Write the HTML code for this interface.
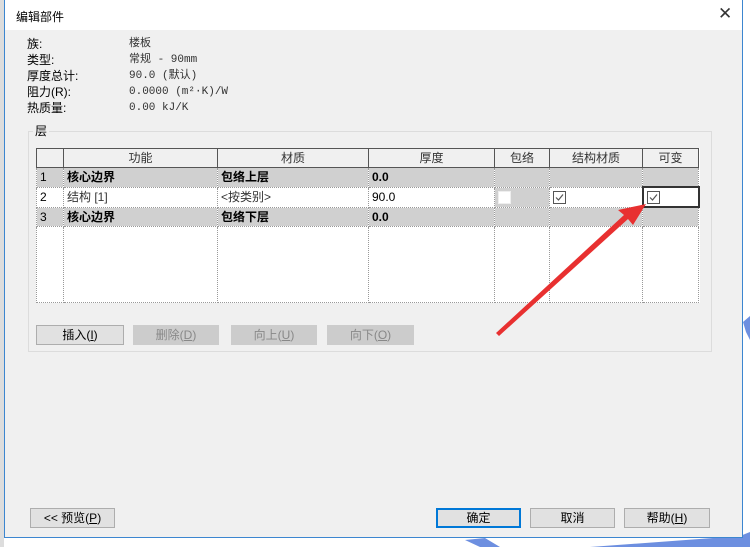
<!DOCTYPE html>
<html><head><meta charset="utf-8"><style>
body{margin:0;width:750px;height:547px;position:relative;overflow:hidden;background:#fff;font-family:"Liberation Sans","Noto Sans CJK SC",sans-serif;font-size:12px;color:#000}
.a{position:absolute}
.dlg{left:4px;top:0;width:739px;height:538px;border:1px solid #3c86d0;border-top:none;background:#f0f0f0;box-sizing:border-box}
.tb{left:0;top:0;width:737px;height:30px;background:#fff}
.mono{font-family:"Liberation Mono","Noto Sans CJK SC",monospace;font-size:11px;color:#333}
table{border-collapse:collapse;position:absolute;left:36px;top:148px;width:662px;table-layout:fixed;background:#fff}
td{height:18px;line-height:18px;padding:0 3px;border:1px dotted #999;white-space:nowrap;font-size:12px;overflow:hidden}
tr.h td{background:#f0f0f0;border:1px solid #555;text-align:center;color:#333}
tr.g td{background:#d0d0d0;font-weight:bold}
.btn{position:absolute;height:20px;border:1px solid #adadad;background:#e1e1e1;text-align:center;line-height:18px;box-sizing:border-box;font-size:12px}
.dis{background:#ccc;border-color:#ccc;color:#888}
</style></head><body>
<div class="a" style="left:0;top:0;width:4px;height:547px;background:#ddd"></div>
<svg class="a" style="left:440px;top:300px" width="310" height="247"><path d="M303 22 L310 16 L310 40 L306 32Z M25 240 L40 247 L60 247 L45 238Z M150 247 L300 236 L310 232 L310 247Z" fill="#6d8fe0"/></svg>
<div class="a dlg">
<div class="a tb"></div>
</div>
<div class="a" style="left:16px;top:8px">编辑部件</div>
<div class="a" style="left:718px;top:4px;font-size:17px;color:#333">✕</div>
<div class="a" style="left:27px;top:36px;line-height:16px">族:<br>类型:<br>厚度总计:<br>阻力(R):<br>热质量:</div>
<div class="a mono" style="left:129px;top:36px;line-height:16px;font-size:11px">楼板<br>常规 - 90mm<br>90.0 (默认)<br>0.0000 (m²·K)/W<br>0.00 kJ/K</div>
<div class="a" style="left:28px;top:131px;width:684px;height:221px;border:1px solid #dcdcdc;box-sizing:border-box"></div>
<div class="a" style="left:33px;top:122px;background:#f0f0f0;padding:0 2px">层</div>
<table>
<col style="width:27px"><col style="width:154px"><col style="width:151px"><col style="width:126px"><col style="width:55px"><col style="width:93px"><col style="width:56px">
<tr class="h"><td style="border:1px solid #555"></td><td>功能</td><td>材质</td><td>厚度</td><td>包络</td><td>结构材质</td><td>可变</td></tr>
<tr class="g"><td style="font-weight:normal">1</td><td>核心边界</td><td>包络上层</td><td>0.0</td><td></td><td></td><td></td></tr>
<tr><td>2</td><td style="color:#333">结构 [1]</td><td style="color:#333">&lt;按类别&gt;</td><td>90.0</td><td style="background:#d0d0d0"><svg width="13" height="13" style="vertical-align:middle"><rect x="0.5" y="0.5" width="12" height="12" fill="#fff" stroke="#eee"/></svg></td><td><svg width="13" height="13" style="vertical-align:middle"><rect x="0.5" y="0.5" width="12" height="12" fill="#fff" stroke="#555"/><path d="M3 6.5 L5.5 9 L10 3.5" fill="none" stroke="#555" stroke-width="1.2"/></svg></td><td style="border:2px solid #333"><svg width="13" height="13" style="vertical-align:middle"><rect x="0.5" y="0.5" width="12" height="12" fill="#fff" stroke="#555"/><path d="M3 6.5 L5.5 9 L10 3.5" fill="none" stroke="#555" stroke-width="1.2"/></svg></td></tr>
<tr class="g"><td style="font-weight:normal">3</td><td>核心边界</td><td>包络下层</td><td>0.0</td><td></td><td></td><td></td></tr>
<tr><td style="height:75px"></td><td></td><td></td><td></td><td></td><td></td><td></td></tr>
</table>
<div class="btn" style="left:36px;top:325px;width:88px">插入(<u>I</u>)</div>
<div class="btn dis" style="left:133px;top:325px;width:86px">删除(<u>D</u>)</div>
<div class="btn dis" style="left:231px;top:325px;width:86px">向上(<u>U</u>)</div>
<div class="btn dis" style="left:327px;top:325px;width:87px">向下(<u>O</u>)</div>
<div class="btn" style="left:30px;top:508px;width:85px">&lt;&lt; 预览(<u>P</u>)</div>
<div class="btn" style="left:436px;top:508px;width:85px;border:2px solid #0078d7;line-height:16px">确定</div>
<div class="btn" style="left:530px;top:508px;width:85px">取消</div>
<div class="btn" style="left:624px;top:508px;width:86px">帮助(<u>H</u>)</div>
<svg class="a" style="left:0;top:0" width="750" height="547">
<path d="M646 204 L618 210 L624 215 L496 333 L499 336 L628 219 L633 225Z" fill="#e83030"/>
</svg>
</body></html>
